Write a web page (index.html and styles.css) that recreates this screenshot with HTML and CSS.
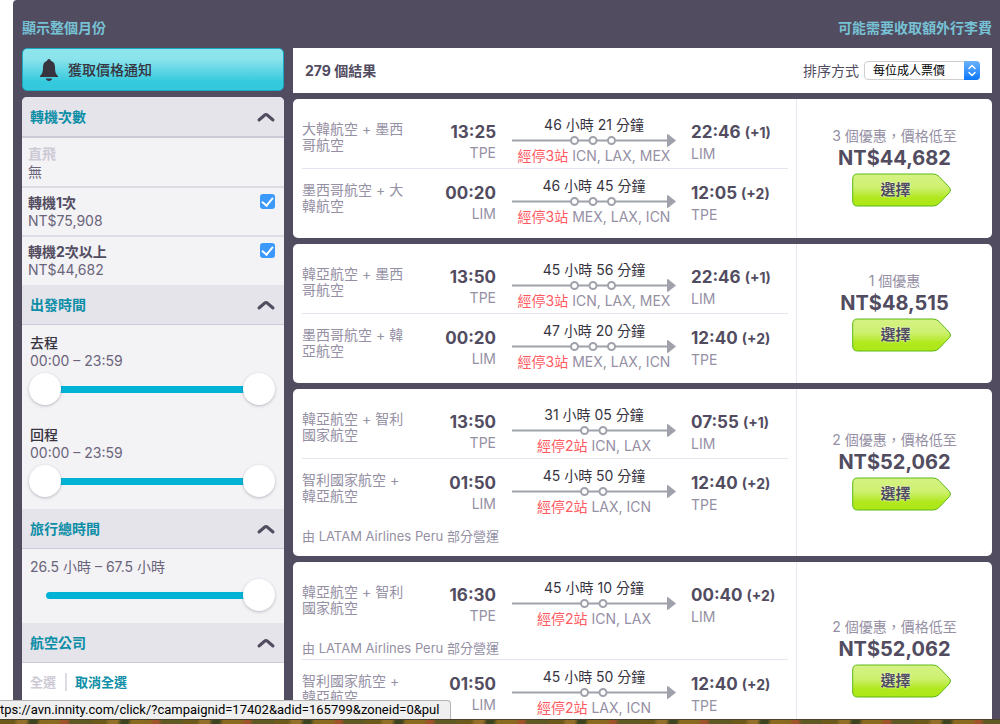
FILE: index.html
```html
<!DOCTYPE html>
<html lang="zh-Hant">
<head>
<meta charset="utf-8">
<title>279 個結果</title>
<link rel="stylesheet" href="styles.css">
</head>
<body>
<svg class="defs" aria-hidden="true">
  <defs>
    <linearGradient id="lime" x1="0" y1="0" x2="0" y2="1">
      <stop offset="0" stop-color="#d6f285"/>
      <stop offset="0.42" stop-color="#cdf070"/>
      <stop offset="0.75" stop-color="#b0e81c"/>
      <stop offset="1" stop-color="#aee817"/>
    </linearGradient>
    <symbol id="chevron" viewBox="0 0 20 12"><path d="M3 9 L8.800 4 Q10 3 11.200 4 L17 9" fill="none" stroke="#524c61" stroke-width="3" stroke-linecap="round" stroke-linejoin="round"/></symbol>
    <symbol id="tag" viewBox="0 0 100 34"><path d="M5.500 1 H81 Q84.500 1 87 3.500 L97.500 14.500 Q99.500 17 97.500 19.500 L87 30.500 Q84.500 33 81 33 H5.500 Q0.700 33 0.700 28 V6 Q0.700 1 5.500 1 Z" fill="url(#lime)" stroke="#5cb815" stroke-width="1"/></symbol>
    <symbol id="two-stops" viewBox="0 0 164 13"><path d="M0 6.500 H156" stroke="#a0a2ab" stroke-width="2"/><path d="M155 1 Q155 -0.500 156.500 0.500 L164 6.500 L156.500 12.500 Q155 13.500 155 12 Z" fill="#a0a2ab"/><g fill="#fff" stroke="#a0a2ab" stroke-width="2"><circle cx="72.500" cy="6.500" r="3.500"/><circle cx="91" cy="6.500" r="3.500"/></g></symbol>
    <symbol id="three-stops" viewBox="0 0 164 13"><path d="M0 6.500 H156" stroke="#a0a2ab" stroke-width="2"/><path d="M155 1 Q155 -0.500 156.500 0.500 L164 6.500 L156.500 12.500 Q155 13.500 155 12 Z" fill="#a0a2ab"/><g fill="#fff" stroke="#a0a2ab" stroke-width="2"><circle cx="62.500" cy="6.500" r="3.500"/><circle cx="81" cy="6.500" r="3.500"/><circle cx="99.500" cy="6.500" r="3.500"/></g></symbol>
  </defs>
</svg>
<div class="window">
  <div class="page">
    <nav class="top-links">
      <a href="#month">顯示整個月份</a>
      <a href="#baggage">可能需要收取額外行李費</a>
    </nav>
    <div class="columns">
      <aside class="sidebar">
        <button class="alert-button" type="button">
          <svg class="bell" viewBox="0 0 18 22"><path d="M9 0 C10.200 0 10.800 0.800 10.800 1.700 C13.800 2.500 15 5 15 8 C15 13 15.800 15 18 17 V18 H0 V17 C2.200 15 3 13 3 8 C3 5 4.200 2.500 7.200 1.700 C7.200 0.800 7.800 0 9 0 Z M5.800 19.500 H12.200 C11.800 21 10.600 22 9 22 C7.400 22 6.200 21 5.800 19.500 Z" fill="#37343f"/></svg>
          <span>獲取價格通知</span>
        </button>
        <div class="filters">
          <section>
            <button class="filter-head thick" type="button"><span>轉機次數</span><svg class="chevron"><use href="#chevron"/></svg></button>
            <div class="option disabled"><div><strong>直飛</strong><p>無</p></div></div>
            <label class="option"><span><strong>轉機1次</strong><span class="price-line">NT$75,908</span></span><input type="checkbox" checked></label>
            <label class="option"><span><strong>轉機2次以上</strong><span class="price-line">NT$44,682</span></span><input type="checkbox" checked></label>
          </section>
          <section>
            <button class="filter-head" type="button"><span>出發時間</span><svg class="chevron"><use href="#chevron"/></svg></button>
            <div class="filter-body">
              <div class="range">
                <strong>去程</strong><p>00:00 – 23:59</p>
                <div class="slider"><div class="track"></div><input type="range" min="0" max="1439" value="0" aria-label="去程"><input type="range" min="0" max="1439" value="1439" aria-label="去程"></div>
              </div>
              <div class="range">
                <strong>回程</strong><p>00:00 – 23:59</p>
                <div class="slider"><div class="track"></div><input type="range" min="0" max="1439" value="0" aria-label="回程"><input type="range" min="0" max="1439" value="1439" aria-label="回程"></div>
              </div>
            </div>
          </section>
          <section>
            <button class="filter-head" type="button"><span>旅行總時間</span><svg class="chevron"><use href="#chevron"/></svg></button>
            <div class="filter-body">
              <div class="range">
                <p>26.5 小時 – 67.5 小時</p>
                <div class="slider"><div class="track"></div><input type="range" min="26.5" max="67.5" step="0.5" value="67.5" aria-label="旅行總時間"></div>
              </div>
            </div>
          </section>
          <section>
            <button class="filter-head" type="button"><span>航空公司</span><svg class="chevron"><use href="#chevron"/></svg></button>
            <div class="airline-actions"><span>全選</span><a href="#none">取消全選</a></div>
          </section>
        </div>
      </aside>
      <main class="results">
        <header class="results-head">
          <h1>279 個結果</h1>
          <div class="sort">
            <label for="sort">排序方式</label>
            <div class="select-box">
              <select id="sort"><option>每位成人票價</option></select>
              <svg class="stepper" viewBox="0 0 16 19"><path d="M5 7.500 L8 4.500 L11 7.500 M5 11.500 L8 14.500 L11 11.500" fill="none" stroke="#fff" stroke-width="1.500" stroke-linecap="round" stroke-linejoin="round"/></svg>
            </div>
          </div>
        </header>

        <article class="card">
          <div class="flights">
            <div class="leg">
              <div class="leg-row">
                <p class="airline">大韓航空 + 墨西哥航空</p>
                <div class="depart"><b>13:25</b><span>TPE</span></div>
                <div class="route"><span class="duration">46 小時 21 分鐘</span><svg class="path"><use href="#three-stops"/></svg><span class="stops"><em>經停3站</em> ICN, LAX, MEX</span></div>
                <div class="arrive"><b>22:46 <small>(+1)</small></b><span>LIM</span></div>
              </div>
            </div>
            <div class="leg">
              <div class="leg-row">
                <p class="airline">墨西哥航空 + 大韓航空</p>
                <div class="depart"><b>00:20</b><span>LIM</span></div>
                <div class="route"><span class="duration">46 小時 45 分鐘</span><svg class="path"><use href="#three-stops"/></svg><span class="stops"><em>經停3站</em> MEX, LAX, ICN</span></div>
                <div class="arrive"><b>12:05 <small>(+2)</small></b><span>TPE</span></div>
              </div>
            </div>
          </div>
          <div class="offer"><p>3 個優惠，價格低至</p><strong>NT$44,682</strong><button class="select-button" type="button"><svg><use href="#tag"/></svg><span>選擇</span></button></div>
        </article>

        <article class="card">
          <div class="flights">
            <div class="leg">
              <div class="leg-row">
                <p class="airline">韓亞航空 + 墨西哥航空</p>
                <div class="depart"><b>13:50</b><span>TPE</span></div>
                <div class="route"><span class="duration">45 小時 56 分鐘</span><svg class="path"><use href="#three-stops"/></svg><span class="stops"><em>經停3站</em> ICN, LAX, MEX</span></div>
                <div class="arrive"><b>22:46 <small>(+1)</small></b><span>LIM</span></div>
              </div>
            </div>
            <div class="leg">
              <div class="leg-row">
                <p class="airline">墨西哥航空 + 韓亞航空</p>
                <div class="depart"><b>00:20</b><span>LIM</span></div>
                <div class="route"><span class="duration">47 小時 20 分鐘</span><svg class="path"><use href="#three-stops"/></svg><span class="stops"><em>經停3站</em> MEX, LAX, ICN</span></div>
                <div class="arrive"><b>12:40 <small>(+2)</small></b><span>TPE</span></div>
              </div>
            </div>
          </div>
          <div class="offer"><p>1 個優惠</p><strong>NT$48,515</strong><button class="select-button" type="button"><svg><use href="#tag"/></svg><span>選擇</span></button></div>
        </article>

        <article class="card">
          <div class="flights">
            <div class="leg">
              <div class="leg-row">
                <p class="airline">韓亞航空 + 智利國家航空</p>
                <div class="depart"><b>13:50</b><span>TPE</span></div>
                <div class="route"><span class="duration">31 小時 05 分鐘</span><svg class="path"><use href="#two-stops"/></svg><span class="stops"><em>經停2站</em> ICN, LAX</span></div>
                <div class="arrive"><b>07:55 <small>(+1)</small></b><span>LIM</span></div>
              </div>
            </div>
            <div class="leg">
              <div class="leg-row">
                <p class="airline">智利國家航空 + 韓亞航空</p>
                <div class="depart"><b>01:50</b><span>LIM</span></div>
                <div class="route"><span class="duration">45 小時 50 分鐘</span><svg class="path"><use href="#two-stops"/></svg><span class="stops"><em>經停2站</em> LAX, ICN</span></div>
                <div class="arrive"><b>12:40 <small>(+2)</small></b><span>TPE</span></div>
              </div>
              <p class="operator">由 LATAM Airlines Peru 部分營運</p>
            </div>
          </div>
          <div class="offer"><p>2 個優惠，價格低至</p><strong>NT$52,062</strong><button class="select-button" type="button"><svg><use href="#tag"/></svg><span>選擇</span></button></div>
        </article>

        <article class="card roomy">
          <div class="flights">
            <div class="leg">
              <div class="leg-row">
                <p class="airline">韓亞航空 + 智利國家航空</p>
                <div class="depart"><b>16:30</b><span>TPE</span></div>
                <div class="route"><span class="duration">45 小時 10 分鐘</span><svg class="path"><use href="#two-stops"/></svg><span class="stops"><em>經停2站</em> ICN, LAX</span></div>
                <div class="arrive"><b>00:40 <small>(+2)</small></b><span>LIM</span></div>
              </div>
              <p class="operator">由 LATAM Airlines Peru 部分營運</p>
            </div>
            <div class="leg">
              <div class="leg-row">
                <p class="airline">智利國家航空 + 韓亞航空</p>
                <div class="depart"><b>01:50</b><span>LIM</span></div>
                <div class="route"><span class="duration">45 小時 50 分鐘</span><svg class="path"><use href="#two-stops"/></svg><span class="stops"><em>經停2站</em> LAX, ICN</span></div>
                <div class="arrive"><b>12:40 <small>(+2)</small></b><span>TPE</span></div>
              </div>
            </div>
          </div>
          <div class="offer"><p>2 個優惠，價格低至</p><strong>NT$52,062</strong><button class="select-button" type="button"><svg><use href="#tag"/></svg><span>選擇</span></button></div>
        </article>
      </main>
    </div>
  </div>
  <div class="status">tps://avn.innity.com/click/?campaignid=17402&amp;adid=165799&amp;zoneid=0&amp;pul</div>
</div>
<div class="desktop"></div>
</body>
</html>
```
FILE: styles.css
```css
* { box-sizing: border-box; }

body {
  margin: 0;
  height: 100vh;
  display: flex;
  flex-direction: column;
  overflow: hidden;
  background: #fff;
  color: #524c61;
  font: 14px/18px Inter, "Noto Sans CJK TC", sans-serif;
}

p, h1 { margin: 0; }
strong, b, em, small { font-style: normal; }
button, select { font: inherit; color: inherit; margin: 0; }
button { border: 0; cursor: pointer; }
a { text-decoration: none; }

.defs { position: absolute; width: 0; height: 0; }

.window {
  position: relative;
  flex: 1;
  min-height: 0;
  overflow: hidden;
}

.page {
  margin-left: 13px;
  padding: 19px 8px 0 9px;
  background: #524c61;
  border-top-left-radius: 4px;
}

.top-links {
  display: flex;
  justify-content: space-between;
  padding-bottom: 11px;
}
.top-links a { color: #76c2d4; font-weight: 700; }

.columns {
  display: grid;
  grid-template-columns: 262px 1fr;
  gap: 9px;
}

.sidebar { display: flex; flex-direction: column; gap: 6px; }

.alert-button {
  display: flex;
  align-items: center;
  gap: 10px;
  height: 43px;
  padding: 0 17px;
  border: 1px solid #19a9c2;
  border-radius: 5px;
  background: linear-gradient(#90e5ee 0%, #8ae3ec 25%, #35c9dd 80%, #33c8dc 100%);
  color: #37343f;
  font-weight: 500;
}
.bell { width: 18px; height: 22px; }

.filters {
  border-radius: 5px 5px 0 0;
  background: #f3f2f5;
  overflow: hidden;
}

.filter-head {
  display: flex;
  align-items: center;
  justify-content: space-between;
  width: 100%;
  height: 40px;
  padding: 0 8px;
  background: #e6e4eb;
  border-bottom: 1px solid #cccad6;
  color: #0c8ea7;
  font-weight: 700;
}
.filter-head.thick { height: 41px; border-bottom-width: 2px; }
.chevron { width: 20px; height: 12px; }

.option {
  display: flex;
  justify-content: space-between;
  align-items: flex-start;
  padding: 6px 9px 5px 6px;
  border-bottom: 2px solid #dddbe4;
}
.option:last-child { padding-bottom: 6px; border-bottom: 0; }
.option strong, .price-line { display: block; }
.option p, .price-line { color: #6a647b; }
.option.disabled { padding-top: 7px; }
.option.disabled strong { color: #cdcad6; }

.option input {
  appearance: none;
  width: 15px;
  height: 15px;
  margin: 0;
  border-radius: 3px;
  background: #3b99fc;
  display: grid;
  place-items: center;
}
.option input:checked::before {
  content: "";
  width: 5px;
  height: 9px;
  margin-bottom: 2px;
  border: solid #fff;
  border-width: 0 2px 2px 0;
  transform: rotate(40deg);
}

.filter-body {
  display: flex;
  flex-direction: column;
  gap: 20px;
  padding: 9px 9px 11px 7px;
}
.range strong, .range p { display: block; padding-left: 1px; }
.range strong { color: #37343f; font-weight: 500; }
.range p { color: #6a647b; }

.slider {
  position: relative;
  height: 34px;
  margin-top: 2px;
  display: flex;
  align-items: center;
}
.track {
  flex: 1;
  height: 7px;
  margin: 0 17px;
  border-radius: 4px;
  background: #00b2d6;
}
.slider input {
  appearance: none;
  position: absolute;
  inset: 0;
  width: 100%;
  margin: 0;
  background: none;
  pointer-events: none;
}
.slider input::-webkit-slider-thumb {
  appearance: none;
  width: 32px;
  height: 32px;
  border-radius: 50%;
  background: #fff;
  box-shadow: 0 1px 3px rgba(82, 76, 97, 0.35);
  pointer-events: auto;
}

.airline-actions {
  display: flex;
  align-items: center;
  padding: 10px 8px 100px;
  background: #fff;
  font-size: 13px;
  font-weight: 700;
}
.airline-actions span { padding-right: 9px; color: #cdcad6; }
.airline-actions a { padding-left: 8px; border-left: 2px solid #dddbe4; color: #0c8ea7; }

.results { display: flex; flex-direction: column; gap: 6px; }

.results-head {
  display: flex;
  align-items: center;
  justify-content: space-between;
  height: 45px;
  padding: 0 12px;
  background: #fff;
}
.results-head h1 { font-size: 14px; font-weight: 700; }
.sort { display: flex; align-items: center; gap: 5px; }

.select-box { position: relative; display: flex; }
.select-box select {
  appearance: none;
  width: 116px;
  height: 19px;
  padding: 0 24px 0 8px;
  border: 1px solid #cfcfcf;
  border-radius: 4px;
  background: #fff;
  color: #000;
  font-size: 12px;
  line-height: 17px;
}
.stepper {
  position: absolute;
  top: 0;
  right: 0;
  width: 16px;
  height: 19px;
  border-radius: 0 4px 4px 0;
  background: linear-gradient(#6cb3fa, #0b78fb);
  pointer-events: none;
}

.card {
  display: grid;
  grid-template-columns: 1fr 196px;
  border-radius: 5px;
  background: #fff;
}
.flights { padding: 9px 8px 9px 9px; }
.roomy .flights { padding-bottom: 37px; }
.leg + .leg { border-top: 1px solid #e6e4ee; }
.leg-row {
  display: grid;
  grid-template-columns: 110px 84px 1fr 97px;
  height: 60px;
}
.airline {
  padding-top: 13px;
  line-height: 16px;
  color: #9590a4;
}
.depart, .arrive { padding-top: 13px; }
.depart { text-align: right; }
.depart b, .arrive b {
  display: block;
  margin-bottom: 1px;
  font-size: 17px;
  line-height: 22px;
}
.arrive small { font-size: 14px; }
.depart span, .arrive span { display: block; color: #9590a4; }
.route {
  display: flex;
  flex-direction: column;
  align-items: center;
  padding: 8px 15px 0 16px;
  white-space: nowrap;
}
.duration { color: #37343f; }
.path { width: 164px; height: 13px; }
.stops { color: #9590a4; }
.stops em { color: #ff5a5f; }
.operator {
  padding: 8px 0 2px;
  font-size: 13px;
  color: #9590a4;
}

.offer {
  display: flex;
  flex-direction: column;
  align-items: center;
  justify-content: center;
  padding-bottom: 3px;
  border-left: 1px solid #e9e7f0;
}
.offer p { color: #9590a4; }
.offer strong { margin-bottom: 2px; font-size: 20px; line-height: 26px; }

.select-button {
  display: grid;
  margin-left: 14px;
  padding: 0;
  background: none;
  font-size: 15px;
  font-weight: 700;
  text-shadow: 0 0 2px #fff;
}
.select-button svg, .select-button span { grid-area: 1 / 1; }
.select-button svg { width: 100px; height: 34px; }
.select-button span { align-self: center; padding-right: 12px; }

.status {
  position: absolute;
  left: 0;
  bottom: 0;
  width: 451px;
  height: 19px;
  overflow: hidden;
  white-space: nowrap;
  border: solid #b4b4b4;
  border-width: 1px 1px 0 0;
  border-top-right-radius: 4px;
  background: #efefef;
  color: #000;
  font: 13px/18px Roboto, sans-serif;
}

.desktop {
  height: 5px;
  border-top: 1px solid #4a4230;
  background: repeating-linear-gradient(100deg, #6b5a1c 0 14px, #94702a 18px 26px, #3c4420 30px 36px, #8a6a20 40px 58px, #a0522a 62px 66px, #5d5a24 70px 90px);
}
```
